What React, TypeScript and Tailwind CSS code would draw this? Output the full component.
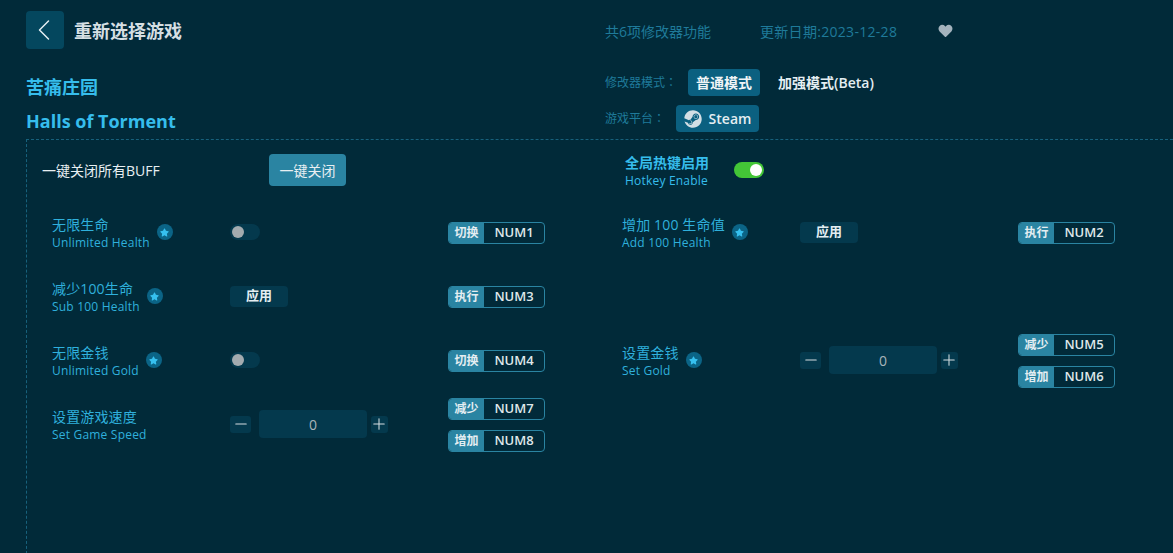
import React from 'react';
import { ChevronLeft, Minus, Plus } from 'lucide-react';
import { FaHeart, FaStar, FaSteam } from 'react-icons/fa';

const font = { fontFamily: '"Open Sans", "Noto Sans CJK SC", sans-serif' };

function KeyChip({ action, keyName }: { action: string; keyName: string }) {
  return (
    <div className="flex h-[22px] w-[97px] overflow-hidden rounded-[4px] border border-[#2a84a2]">
      <div className="flex w-[35px] shrink-0 items-center justify-center bg-[#2a84a2] text-[12px] font-bold text-[#e4eef2]">
        {action}
      </div>
      <div className="flex flex-1 items-center justify-center text-[13px] font-semibold text-[#dfe7ea]">{keyName}</div>
    </div>
  );
}

function Label({ zh, en, star = true }: { zh: string; en: string; star?: boolean }) {
  return (
    <div className="flex w-[178px] shrink-0 items-center gap-[7px]">
      <div className="pt-[2px]">
        <div className="text-[14px] leading-[18px] tracking-[0.15px] text-[#2fb0dc]">{zh}</div>
        <div className="text-[12px] leading-[17px] tracking-[0.2px] text-[#2fb0dc]">{en}</div>
      </div>
      {star && (
        <div className="flex h-4 w-4 items-center justify-center rounded-full bg-[#0b6486]">
          <FaStar className="h-[9px] w-[9px] text-[#36c0ef]" />
        </div>
      )}
    </div>
  );
}

function Toggle() {
  return (
    <div className="flex h-4 w-[30px] items-center rounded-full bg-[#04394d] pl-[2px]">
      <div className="h-3 w-3 rounded-full bg-[#a3abaf]" />
    </div>
  );
}

function ApplyButton() {
  return (
    <div className="flex h-[21px] w-[58px] items-center justify-center rounded-[4px] bg-[#04394d] text-[13px] font-bold text-[#e4eef2]">
      应用
    </div>
  );
}

function Stepper() {
  return (
    <div className="flex items-center">
      <div className="flex h-[17px] w-[21px] items-center justify-center rounded-[3px] bg-[#04394d] text-[#d5dee2]">
        <Minus className="h-[18px] w-[18px]" strokeWidth={1.4} />
      </div>
      <div className="ml-2 flex h-7 w-[108px] items-center justify-center rounded-[4px] bg-[#04394d] text-[14px] text-[#a9b5ba]">
        0
      </div>
      <div className="ml-1 flex h-[17px] w-[17px] items-center justify-center rounded-[3px] bg-[#04394d] text-[#d5dee2]">
        <Plus className="mr-[1px] h-[18px] w-[18px] shrink-0" strokeWidth={1.4} />
      </div>
    </div>
  );
}

function Row({ label, control, keys }: { label: React.ReactNode; control?: React.ReactNode; keys: React.ReactNode }) {
  return (
    <div className="flex h-16 items-center">
      {label}
      <div className="w-[218px] shrink-0">{control}</div>
      <div className="mt-[2px] flex flex-col gap-[10px]">{keys}</div>
    </div>
  );
}

export default function App() {
  return (
    <div style={font} className="h-[553px] w-[1173px] overflow-hidden bg-[#012a39]">
      {/* Top bar */}
      <div className="flex h-[61px] items-center pl-[26px] pt-[1px]">
        <div className="mt-[10px] flex h-[38px] w-[38px] items-center justify-center self-start rounded-[4px] bg-[#04475e] text-[#e4eef2]">
          <ChevronLeft className="mr-[2px] h-9 w-9 shrink-0" strokeWidth={1} />
        </div>
        <div className="ml-[10px] w-[531px] text-[18px] font-bold text-[#d5dfe3]">重新选择游戏</div>
        <div className="w-[155px] text-[14px] text-[#1f7a9a]">共6项修改器功能</div>
        <div className="w-[178px] text-[14px] tracking-[0.3px] text-[#1f7a9a]">更新日期:2023-12-28</div>
        <FaHeart className="h-[14px] w-[15px] text-[#a4b3bd]" />
      </div>

      {/* Game info and mode */}
      <div className="flex h-[78px] pl-[26px]">
        <div className="w-[579px]">
          <div className="mt-[14px] text-[18px] font-bold leading-[24px] text-[#36bdec]">苦痛庄园</div>
          <div className="mt-[10px] text-[18px] font-bold leading-[24px] text-[#36bdec]">Halls of Torment</div>
        </div>
        <div className="pt-2">
          <div className="flex h-[27px] items-center">
            <span className="w-[83px] text-[12px] text-[#1f7a9a]">
              修改器模式<span className="font-['Noto_Sans_CJK_TC']">：</span>
            </span>
            <span className="flex h-[27px] w-[72px] items-center justify-center rounded-[4px] bg-[#0b6080] text-[14px] font-semibold text-[#f0f5f7]">
              普通模式
            </span>
            <span className="ml-[18px] text-[14px] font-semibold text-[#e4eef2]">加强模式(Beta)</span>
          </div>
          <div className="mt-[9px] flex h-[27px] items-center">
            <span className="w-[71px] text-[12px] text-[#1f7a9a]">
              游戏平台<span className="font-['Noto_Sans_CJK_TC']">：</span>
            </span>
            <span className="flex h-[27px] w-[83px] items-center justify-center gap-[7px] rounded-[4px] bg-[#0b6080] text-[14px] font-semibold text-[#e4eef2]">
              <FaSteam className="h-[18px] w-[18px] text-[#d3dfe5]" />
              Steam
            </span>
          </div>
        </div>
      </div>

      {/* Cheat panel */}
      <div className="ml-[26px] h-[420px] border-l border-t border-dashed border-[#17617c]">
        <div className="flex h-[60px] items-center pl-[15px]">
          <div className="w-[227px] text-[14px] text-[#e8eff2]">一键关闭所有BUFF</div>
          <div className="flex h-8 w-[77px] items-center justify-center rounded-[4px] bg-[#2a84a2] text-[14px] text-[#e8eff2]">
            一键关闭
          </div>
          <div className="ml-[279px] w-[109px] pt-[2px]">
            <div className="text-[14px] font-bold leading-[18px] text-[#36bdec]">全局热键启用</div>
            <div className="text-[12px] leading-[17px] tracking-[0.2px] text-[#36bdec]">Hotkey Enable</div>
          </div>
          <div className="flex h-4 w-[30px] items-center justify-end rounded-full bg-[#43c637] pr-[2px]">
            <div className="h-3 w-3 rounded-full bg-white" />
          </div>
        </div>

        <div className="grid grid-cols-[570px_1fr] pl-[25px]">
          <Row
            label={<Label zh="无限生命" en="Unlimited Health" />}
            control={<Toggle />}
            keys={<KeyChip action="切换" keyName="NUM1" />}
          />
          <Row
            label={<Label zh="增加 100 生命值" en="Add 100 Health" />}
            control={<ApplyButton />}
            keys={<KeyChip action="执行" keyName="NUM2" />}
          />
          <Row
            label={<Label zh="减少100生命" en="Sub 100 Health" />}
            control={<ApplyButton />}
            keys={<KeyChip action="执行" keyName="NUM3" />}
          />
          <div />
          <Row
            label={<Label zh="无限金钱" en="Unlimited Gold" />}
            control={<Toggle />}
            keys={<KeyChip action="切换" keyName="NUM4" />}
          />
          <Row
            label={<Label zh="设置金钱" en="Set Gold" />}
            control={<Stepper />}
            keys={
              <>
                <KeyChip action="减少" keyName="NUM5" />
                <KeyChip action="增加" keyName="NUM6" />
              </>
            }
          />
          <Row
            label={<Label zh="设置游戏速度" en="Set Game Speed" star={false} />}
            control={<Stepper />}
            keys={
              <>
                <KeyChip action="减少" keyName="NUM7" />
                <KeyChip action="增加" keyName="NUM8" />
              </>
            }
          />
        </div>
      </div>
    </div>
  );
}
